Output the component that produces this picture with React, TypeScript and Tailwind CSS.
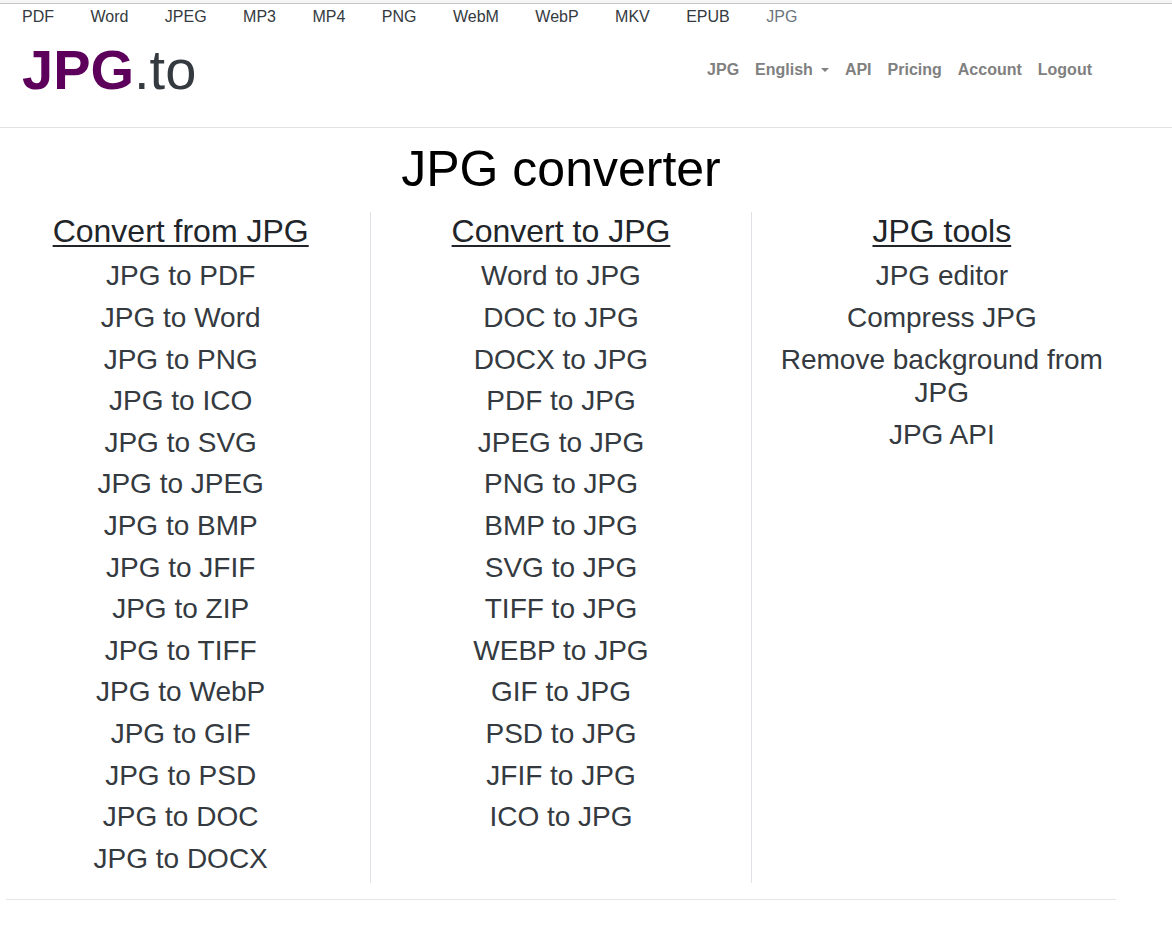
const formats = ["PDF", "Word", "JPEG", "MP3", "MP4", "PNG", "WebM", "WebP", "MKV", "EPUB"];

const columns = [
  {
    title: "Convert from JPG",
    links: ["PDF", "Word", "PNG", "ICO", "SVG", "JPEG", "BMP", "JFIF", "ZIP", "TIFF", "WebP", "GIF", "PSD", "DOC", "DOCX"].map(
      (format) => `JPG to ${format}`
    ),
  },
  {
    title: "Convert to JPG",
    links: ["Word", "DOC", "DOCX", "PDF", "JPEG", "PNG", "BMP", "SVG", "TIFF", "WEBP", "GIF", "PSD", "JFIF", "ICO"].map(
      (format) => `${format} to JPG`
    ),
  },
  {
    title: "JPG tools",
    links: ["JPG editor", "Compress JPG", "Remove background from JPG", "JPG API"],
  },
];

const Header = () => {
  return (
    <header className="border-b border-[#e2e2e2]">
      <div className="h-1 border-b border-[#c4c4c4] bg-[#f6f6f6]" />
      {/* Other formats */}
      <nav aria-label="Formats" className="px-[22px] pt-px leading-6 text-[#343a40]">
        {formats.map((format) => (
          <span key={format}>
            <a href="#" className="mr-8">{format}</a>{" "}
          </span>
        ))}
        <a href="#" className="text-[#6c757d]">JPG</a>
      </nav>
      <div className="flex items-center justify-between pr-20 pb-4 pl-[22px]">
        <a href="#" className="text-[56px] leading-[82px] text-[#343a40]">
          <b className="text-[#5c005c]">JPG</b>.to
        </a>
        <nav aria-label="Main" className="flex items-center gap-4 font-bold text-[#808080]">
          <a href="#">JPG</a>
          <button type="button" className="flex items-center gap-2">
            English
            <span className="border-x-4 border-t-4 border-x-transparent border-t-[#808080]" />
          </button>
          <a href="#">API</a>
          <a href="#">Pricing</a>
          <a href="#">Account</a>
          <a href="#">Logout</a>
        </nav>
      </div>
    </header>
  );
};

const App = () => {
  return (
    <div className="bg-white font-['Liberation_Sans',Arial,sans-serif] text-base">
      <Header />
      <main className="mr-14 ml-1.5">
        <h1 className="pt-[11px] pb-[13px] text-center text-[50px] leading-[60px] text-black">JPG converter</h1>
        <div className="-mr-4 -ml-[15px] grid grid-cols-3">
          {columns.map((column) => (
            <section
              key={column.title}
              className="border-r border-[#dee2e6] px-4 text-center leading-[1.2] last:border-r-0"
            >
              <h2 className="mb-[9px] text-[32px] text-[#212529] underline decoration-2 underline-offset-[3px]">
                {column.title}
              </h2>
              <ul className="text-[28px] text-[#343a40]">
                {column.links.map((link) => (
                  <li key={link} className="mb-2">
                    <a href="#">{link}</a>
                  </li>
                ))}
              </ul>
            </section>
          ))}
        </div>
        <hr className="my-4 border-[#e5e5e5]" />
      </main>
    </div>
  );
};

export default App;
